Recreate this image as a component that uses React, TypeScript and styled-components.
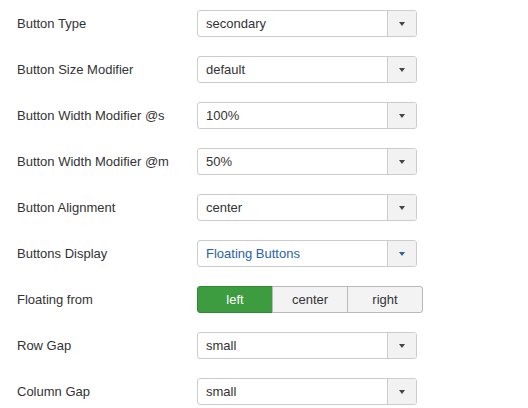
import styled, { createGlobalStyle } from "styled-components";

const GlobalStyle = createGlobalStyle`
  body {
    margin: 0;
    background: #ffffff;
    font-family: "Helvetica Neue", "Liberation Sans", Arial, sans-serif;
    font-size: 13px;
    color: #333333;
  }
`;

type Field =
  | { label: string; kind: "select"; value: string; active?: boolean }
  | { label: string; kind: "group"; options: string[]; selected: number };

const fields: Field[] = [
  { label: "Button Type", kind: "select", value: "secondary" },
  { label: "Button Size Modifier", kind: "select", value: "default" },
  { label: "Button Width Modifier @s", kind: "select", value: "100%" },
  { label: "Button Width Modifier @m", kind: "select", value: "50%" },
  { label: "Button Alignment", kind: "select", value: "center" },
  { label: "Buttons Display", kind: "select", value: "Floating Buttons", active: true },
  { label: "Floating from", kind: "group", options: ["left", "center", "right"], selected: 0 },
  { label: "Row Gap", kind: "select", value: "small" },
  { label: "Column Gap", kind: "select", value: "small" },
];

export default function App() {
  return (
    <>
      <GlobalStyle />
      <Form>
        {fields.map((f) => (
          <Row key={f.label}>
            <Label>{f.label}</Label>
            {f.kind === "select" ? (
              <Select>
                <SelectValue active={f.active}>{f.value}</SelectValue>
                <Toggle>
                  <Caret active={f.active} />
                </Toggle>
              </Select>
            ) : (
              <Group>
                {f.options.map((o, i) => (
                  <GroupButton key={o} selected={i === f.selected}>
                    {o}
                  </GroupButton>
                ))}
              </Group>
            )}
          </Row>
        ))}
      </Form>
    </>
  );
}

const Form = styled.div`
  display: flex;
  flex-direction: column;
  gap: 19px;
  padding: 10px 0 0 17px;
`;

const Row = styled.div`
  display: flex;
  align-items: center;
  height: 27px;
`;

const Label = styled.div`
  width: 180px;
  color: #333333;
`;

const Select = styled.div`
  display: flex;
  width: 220px;
  height: 27px;
  box-sizing: border-box;
  border: 1px solid #cccccc;
  border-radius: 3px;
  background: #ffffff;
  overflow: hidden;
`;

const SelectValue = styled.div<{ active?: boolean }>`
  flex: 1;
  display: flex;
  align-items: center;
  padding-left: 8px;
  color: ${({ active }) => (active ? "#2a62a8" : "#333333")};
`;

const Toggle = styled.div`
  width: 28px;
  display: flex;
  align-items: center;
  justify-content: center;
  background: #f2f2f2;
  border-left: 1px solid #cccccc;
`;

const Caret = styled.span<{ active?: boolean }>`
  width: 0;
  height: 0;
  border-left: 3.5px solid transparent;
  border-right: 3.5px solid transparent;
  border-top: 4px solid ${({ active }) => (active ? "#2a62a8" : "#444444")};
  margin-top: 1px;
`;

const Group = styled.div`
  display: flex;
  height: 27px;
  width: 226px;
`;

const GroupButton = styled.div<{ selected?: boolean }>`
  flex: 1;
  display: flex;
  align-items: center;
  justify-content: center;
  box-sizing: border-box;
  border: 1px solid ${({ selected }) => (selected ? "#2f8a31" : "#b8b8b8")};
  background: ${({ selected }) => (selected ? "#3d9c3f" : "#f3f3f3")};
  color: ${({ selected }) => (selected ? "#ffffff" : "#333333")};

  & + & {
    margin-left: -1px;
  }

  &:first-child {
    border-radius: 3px 0 0 3px;
  }

  &:last-child {
    border-radius: 0 3px 3px 0;
  }
`;
